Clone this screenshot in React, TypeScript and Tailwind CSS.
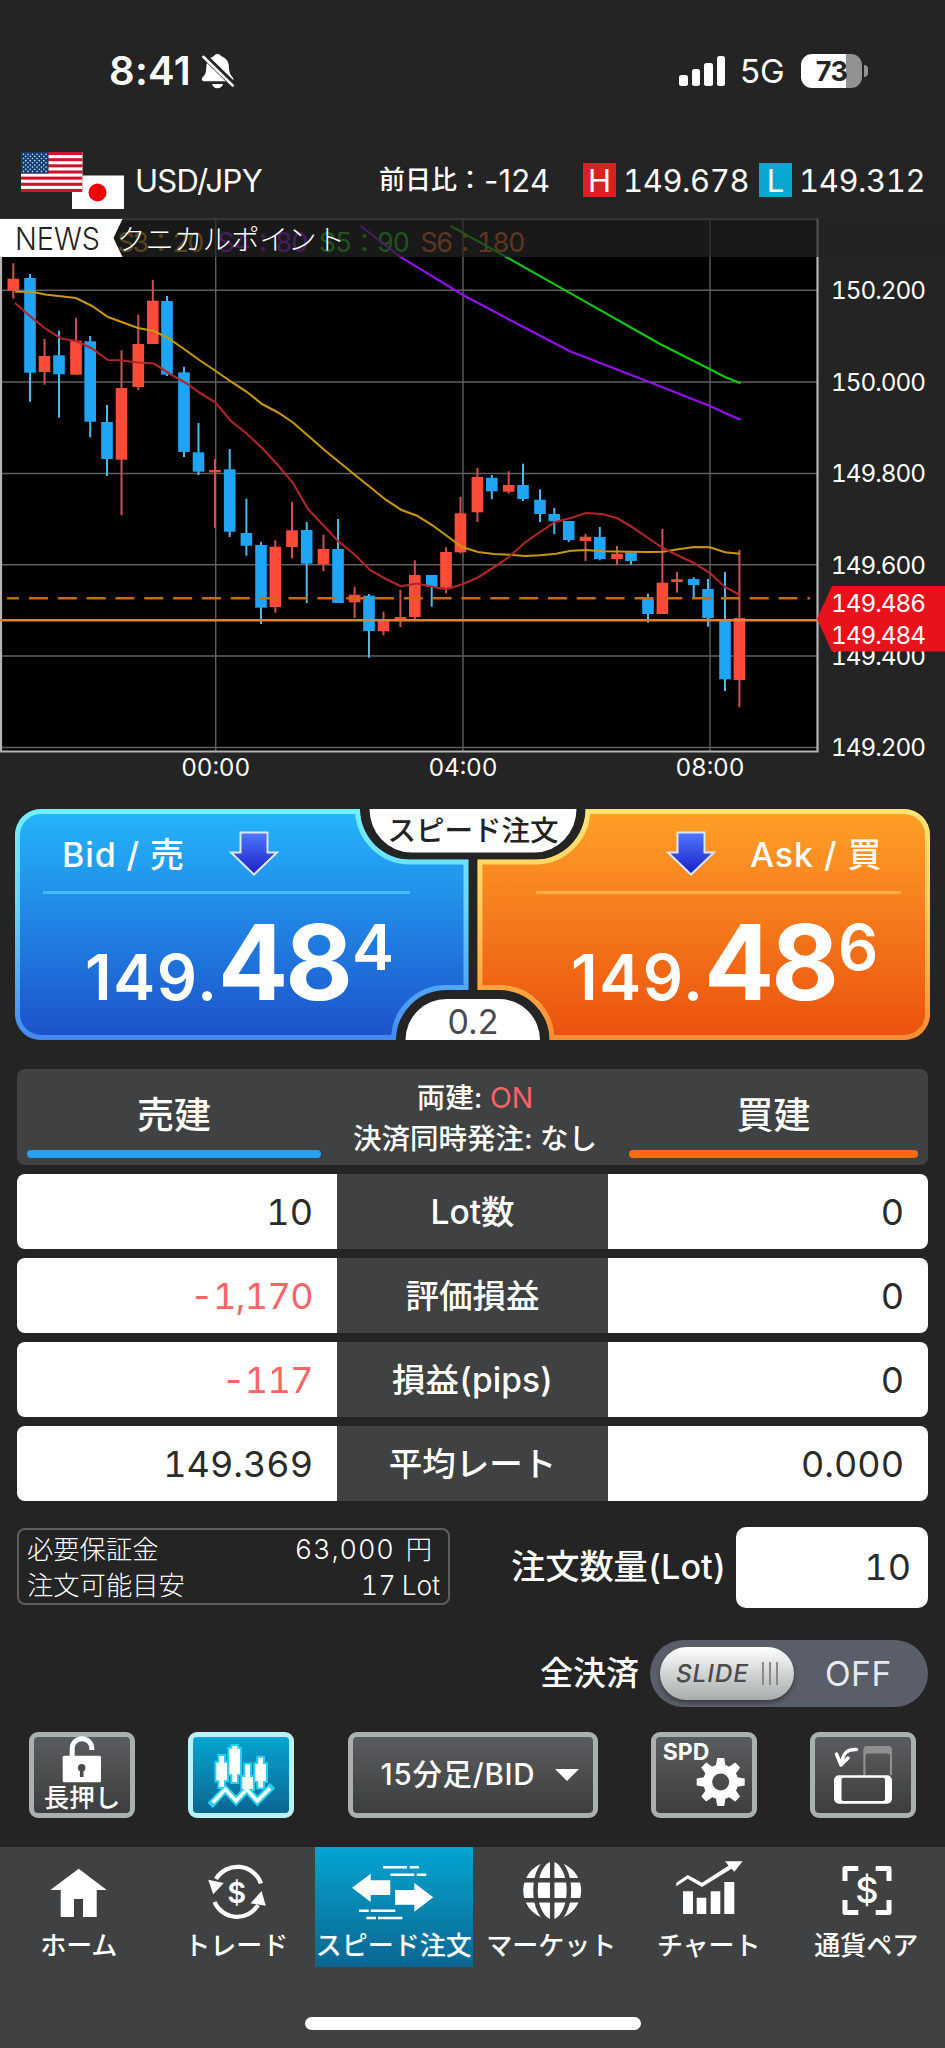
import React from "react";
import clsx from "clsx";

type Candle = [x: number, high: number, top: number, bottom: number, low: number, up: 0 | 1];

const candles: Candle[] = [
  [13.3, 263.3, 278.7, 290.7, 298.7, 1],
  [30, 274, 278, 372.7, 401.7, 0],
  [44.5, 339, 356, 372, 384.7, 1],
  [59, 330.7, 355.3, 374.3, 417.7, 0],
  [76, 318, 340.7, 374.7, 374.7, 1],
  [90.2, 336, 341.3, 421.7, 437.3, 0],
  [107, 405, 422, 459, 476, 0],
  [121.5, 350.3, 388, 459.7, 515, 1],
  [138.3, 314.7, 344, 387, 390, 1],
  [152.8, 280, 300.7, 344, 344, 1],
  [167, 296, 301, 374.7, 376, 0],
  [184, 366.7, 372.3, 452, 457, 0],
  [198.5, 423, 452.3, 471.7, 475, 0],
  [215, 459, 470, 472.3, 527.7, 1],
  [229.7, 449, 469.3, 531.7, 537, 0],
  [246.4, 498.7, 533, 545.7, 555.7, 0],
  [261, 542, 545, 607.7, 624, 0],
  [275.3, 540.3, 546.7, 607, 612.7, 1],
  [292, 502, 530.3, 547, 558.3, 1],
  [306.7, 522, 530, 563.7, 603, 0],
  [323.5, 534.7, 549, 564.3, 571.3, 1],
  [338, 519, 549, 603, 603, 0],
  [354.6, 586.7, 594.7, 602.3, 618, 1],
  [369, 594, 595.7, 631, 657.7, 0],
  [383.5, 611.7, 620.3, 631.3, 635.3, 1],
  [400.4, 590, 617, 621, 627, 1],
  [414.8, 560.3, 575, 617, 619.3, 1],
  [431.7, 575, 575, 587, 606.7, 0],
  [446, 547.3, 552, 587.7, 593.3, 1],
  [460.5, 496.7, 513.3, 552.3, 553.3, 1],
  [477.4, 468, 477, 512.3, 522, 1],
  [491.8, 475, 477.7, 491.3, 499.3, 0],
  [508.7, 471.3, 485, 491.7, 493.7, 1],
  [523, 463.7, 485, 499, 501, 0],
  [540, 489.3, 499.7, 514, 522, 0],
  [554.3, 508, 514, 521.3, 534, 0],
  [568.7, 521, 521, 540, 542, 0],
  [585.5, 534, 536.7, 541, 561, 1],
  [599.8, 527, 537, 559, 560.3, 0],
  [617, 546, 553.7, 559, 565, 1],
  [631, 551.7, 552.3, 561, 564.7, 0],
  [648, 593.7, 599, 614, 622.7, 0],
  [662.4, 529, 582.7, 614, 614, 1],
  [677, 572, 579.3, 582, 592.7, 1],
  [693.7, 577.3, 579, 585, 598.3, 0],
  [708, 579, 589, 618, 626.7, 0],
  [725, 572, 621, 679.3, 691, 0],
  [739.4, 550, 618, 680, 707.3, 1],
];

const averages = [
  {
    color: "#c8960f",
    points:
      "15,291.7 32,291.7 45,294.5 76,298 92,306 108,317 138,328 154,331 168,338 184,349 200,360.5 215,370.5 230,381 247,392 262,404 278,412.5 293,422.5 325,450.5 355,475 370,487 386,500 401,509.7 417,515.7 432,525 447,536 462,547 478,552 494,554 510,554.7 525,556 540,555.3 556,553.7 571,550.7 586,550 602,551.3 648,552 663,551.7 680,549 694,547 710,547.3 725,552.3 740,553.7",
  },
  {
    color: "#b0262b",
    points:
      "15,303 31,317 46,329 61,338.5 76,341 92,348.5 108,360 120,360.3 138,362.5 154,363.5 170,374 186,383 200,393 215,402 231,421 246,433 262,448 277,464 293,483 308,509 323,525 338,541 354,554 370,570 386,579 401,586.3 417,583.5 431,586.5 446,589.5 463,584 478,577.5 495,566.5 509,557 525,542.5 540,532 555,522 571,518 586,513 602,514 617,518 632,527 648,538 663,548 679,556 694,563 710,573 725,587 740,595",
  },
  {
    color: "#9410f0",
    points: "360.7,226 400,256.7 463,295 510,320 570,351.3 646.7,381 710,406 725,413 740.7,419.7",
  },
  {
    color: "#12c812",
    points: "450.7,226 506.7,257.3 560,287.3 660,344 710,369.3 725,377 740.7,383.3",
  },
];

const priceTicks = [
  ["150.200", 290.3],
  ["150.000", 382],
  ["149.800", 473.5],
  ["149.600", 564.7],
  ["149.400", 656],
  ["149.200", 747.5],
] as const;

const timeTicks = [
  ["00:00", 215.7],
  ["04:00", 463],
  ["08:00", 710],
] as const;

const legend = [
  ["S3：20", 117.5, 87, "#c8960f"],
  ["S4：80", 217.5, 91, "#9410f0"],
  ["S5：90", 319, 91, "#12c812"],
  ["S6：180", 420.5, 105, "#e0641e"],
] as const;

const rows = [
  { label: "Lot数", sell: "10", buy: "0", loss: false },
  { label: "評価損益", sell: "-1,170", buy: "0", loss: true },
  { label: "損益(pips)", sell: "-117", buy: "0", loss: true },
  { label: "平均レート", sell: "149.369", buy: "0.000", loss: false },
];

const StatusBar = () => (
  <div className="flex h-[143px] items-start justify-between pl-[109px] pr-[77px] pt-[47px]">
    <div className="flex h-12 items-center">
      <span className="w-[82px] whitespace-nowrap text-[40px] font-semibold leading-none tracking-[0.300px]">8:41</span>
      <svg width="34" height="36" viewBox="0 0 34 36" className="ml-[10px]">
        <path
          d="M16.500 1c-2 0-3.300 1-3.600 2.300C8.300 4.700 5.700 8.200 5.400 13.500c-.3 6.500-1.200 8.300-3.800 10.700-1.400 1.500-.8 4 1.600 4h27c2 0 3-2.200 1.600-3.800-2.500-2.600-3.600-4.500-3.900-10.900-.3-5.300-3-8.800-7.700-10.200C19.800 2 18.500 1 16.500 1zM11 31h11c-.5 2.500-2.600 4.200-5.500 4.200S11.500 33.500 11 31z"
          fill="#fff"
        />
        <path d="M1.500 1.500 34 33" stroke="#242424" strokeWidth="6" />
        <path d="M2.300 3.800 31.800 32.600" stroke="#fff" strokeWidth="2.600" strokeLinecap="round" />
      </svg>
    </div>
    <div className="flex h-12 items-center">
      <div className="flex h-[30px] items-end gap-[4px]">
        <span className="h-[11px] w-[8.500px] rounded-[2.500px] bg-white" />
        <span className="h-[17px] w-[8.500px] rounded-[2.500px] bg-white" />
        <span className="h-[23px] w-[8.500px] rounded-[2.500px] bg-white" />
        <span className="h-[30px] w-[8.500px] rounded-[2.500px] bg-white" />
      </div>
      <span className="ml-[15px] w-[61px] text-[33px] leading-none">5G</span>
      <div className="flex h-[34px] w-[61px] items-center justify-center rounded-[11px] bg-[linear-gradient(90deg,#fff_45px,#929292_45px)]">
        <span className="text-[27px] font-bold leading-none tracking-[-0.500px] text-[#242424]">73</span>
      </div>
      <span className="ml-[2px] h-3 w-1 rounded-r-full bg-[#929292]" />
    </div>
  </div>
);

const Flags = () => (
  <svg width="104" height="58" viewBox="0 0 104 58" className="ml-[21px] shrink-0">
    <rect width="61.500" height="40" fill="#fff" />
    {[0, 1, 2, 3, 4, 5, 6].map((i) => (
      <rect key={i} y={i * 6.15} width="61.500" height="3.080" fill="#d0142f" />
    ))}
    <rect width="27.500" height="21.500" fill="#123d73" />
    {Array.from({ length: 9 }, (_, r) =>
      Array.from({ length: r % 2 ? 5 : 6 }, (_, c) => (
        <circle key={`${r}-${c}`} cx={2.5 + c * 4.5 + (r % 2 ? 2.25 : 0)} cy={2.2 + r * 2.15} r="0.800" fill="#cfe4f2" />
      ))
    )}
    <path d="M61.500 23.500H103V57H51V40H61.500z" fill="#fff" />
    <circle cx="76.500" cy="40.500" r="9" fill="#f50000" />
  </svg>
);

const PairHeader = () => (
  <div className="flex h-[75px] items-start pt-[9px] text-[31px]">
    <Flags />
    <div className="mt-[4px] flex h-[48px] flex-1 items-center whitespace-nowrap leading-none">
      <span className="ml-[10px] w-[244px] tracking-[-0.700px]">USD/JPY</span>
      <span className="text-[26px] font-medium">前日比：</span>
      <span className="ml-[1px] w-[99px] tracking-[0.200px]">-124</span>
      <span className="flex h-[34px] w-[33px] items-center justify-center bg-[#d92121]">H</span>
      <span className="ml-[7px] w-[136px] tracking-[-0.400px] tabular-nums">149.678</span>
      <span className="flex h-[34px] w-[33px] items-center justify-center bg-[#06a8d2]">L</span>
      <span className="ml-[7px] tracking-[-0.400px] tabular-nums">149.312</span>
    </div>
  </div>
);

const Chart = () => (
  <svg width="945" height="578" viewBox="0 218 945 578" className="block shrink-0 tabular-nums">
    <rect x="0" y="219" width="818" height="533" fill="#000" />
    <g stroke="#5f5f5f" strokeWidth="1.400">
      {timeTicks.map(([label, x]) => (
        <line key={label} x1={x} x2={x} y1="219" y2="751" />
      ))}
      {priceTicks.map(([label, y]) => (
        <line key={label} x1="0" x2="817" y1={y} y2={y} />
      ))}
      <line x1="0" x2="818" y1="219.500" y2="219.500" />
    </g>
    <path d="M1 219V751.500H817.500V219" fill="none" stroke="#b4b4b4" strokeWidth="2.200" />

    {legend.map(([label, x, w, color]) => (
      <text key={label} x={x} y="252" fontSize="26.500" fill={color} textLength={w} lengthAdjust="spacing">
        {label}
      </text>
    ))}

    {candles.map(([x, high, top, bottom, low, up]) => (
      <g key={x}>
        <rect x={x - 1} y={high} width="2" height={low - high} fill={up ? "#cf5050" : "#4fb9ee"} />
        <rect x={x - 5.8} y={top} width="11.600" height={bottom - top} fill={up ? "#ff4b3a" : "#20a4f6"} />
      </g>
    ))}
    {averages.map((line) => (
      <polyline key={line.color} points={line.points} fill="none" stroke={line.color} strokeWidth="2.100" />
    ))}
    <line x1="7" x2="19" y1="598.300" y2="598.300" stroke="#cd6a08" strokeWidth="2.400" />
    <line x1="29" x2="810" y1="598.300" y2="598.300" stroke="#cd6a08" strokeWidth="2.400" strokeDasharray="19 9.830" />
    <line x1="0" x2="817" y1="620.200" y2="620.200" stroke="#de8336" strokeWidth="2.400" />

    {/* news ticker */}
    <rect x="0" y="219" width="945" height="38" fill="#242424" fillOpacity="0.700" />
    <path d="M0 219H122.500L113.500 238L122.500 257H0z" fill="#fff" />
    <text x="15" y="250" fontSize="31.500" fontWeight="300" fill="#222" textLength="85" lengthAdjust="spacingAndGlyphs">
      NEWS
    </text>
    <text x="117" y="249.500" fontSize="28.500" fontWeight="300" fill="#fff">
      クニカルポイント
    </text>

    <g fill="#fff" fontSize="24.300">
      {priceTicks.map(([label, y]) => (
        <text key={label} x="831" y={y + 8.8} textLength="95" lengthAdjust="spacing">
          {label}
        </text>
      ))}
      {timeTicks.map(([label, x]) => (
        <text key={label} x={x - 34.5} y="775.700" textLength="69" lengthAdjust="spacing">
          {label}
        </text>
      ))}
      <path d="M817 618.700 832 586H945V651.500H832z" fill="#e9121c" />
      <text x="831" y="611.500" textLength="95" lengthAdjust="spacing">
        149.486
      </text>
      <text x="831" y="643.700" textLength="95" lengthAdjust="spacing">
        149.484
      </text>
    </g>
  </svg>
);

const DownArrow = ({ className }: { className?: string }) => (
  <svg width="50" height="48" viewBox="0 0 50 48" className={clsx("shrink-0", className)}>
    <path d="M11.500 2.500H38.500V22.500H48L25 44.500 2 22.500H11.500z" fill="url(#arrow)" stroke="#dce6ff" strokeWidth="2" />
  </svg>
);

const Price = ({ pip, className }: { pip: string; className?: string }) => (
  <div className={clsx("flex items-end font-semibold leading-none", className)}>
    <span className="w-[133px] shrink-0 text-[63px] leading-[59px] tracking-[1.600px]">149.</span>
    <span className="w-[134px] shrink-0 text-[104px] font-bold leading-[89px] tracking-[-3px]">48</span>
    <span className="mb-[30px] text-[63px] leading-[59px]">{pip}</span>
  </div>
);

const RatePanel = () => (
  <div className="grid h-[260px] w-[945px] shrink-0 pt-[13px]">
    <svg width="945" height="231" viewBox="0 809 945 231" className="[grid-area:1/1]">
      <defs>
        <linearGradient id="blue" x1="0" y1="0" x2="0" y2="1">
          <stop offset="0" stopColor="#24b6fb" />
          <stop offset="1" stopColor="#1d50ca" />
        </linearGradient>
        <linearGradient id="blueEdge" gradientUnits="userSpaceOnUse" x1="0" y1="809" x2="0" y2="1040">
          <stop offset="0" stopColor="#72efff" />
          <stop offset="0.400" stopColor="#66d8fd" />
          <stop offset="1" stopColor="#4488f2" />
        </linearGradient>
        <linearGradient id="orange" x1="0" y1="0" x2="0" y2="1">
          <stop offset="0" stopColor="#ffa128" />
          <stop offset="1" stopColor="#ea500e" />
        </linearGradient>
        <linearGradient id="orangeEdge" gradientUnits="userSpaceOnUse" x1="0" y1="809" x2="0" y2="1040">
          <stop offset="0" stopColor="#ffe572" />
          <stop offset="0.400" stopColor="#ffce5c" />
          <stop offset="1" stopColor="#fe8c32" />
        </linearGradient>
        <linearGradient id="arrow" x1="0" y1="0" x2="0" y2="1">
          <stop offset="0" stopColor="#5078ff" />
          <stop offset="1" stopColor="#1a1fc4" />
        </linearGradient>
        <clipPath id="bidClip">
          <path d="M41 809H360A50 50.500 0 0 0 410 859.500H468.500V990H446A50 50 0 0 0 396 1040H41A26 26 0 0 1 15 1014V835A26 26 0 0 1 41 809z" />
        </clipPath>
        <clipPath id="askClip">
          <path d="M904 809H585.500A50 50.500 0 0 1 535.500 859.500H477.500V990H499.500A50 50 0 0 1 549.500 1040H904A26 26 0 0 0 930 1014V835A26 26 0 0 0 904 809z" />
        </clipPath>
      </defs>
      <path
        clipPath="url(#bidClip)"
        fill="url(#blue)"
        stroke="url(#blueEdge)"
        strokeWidth="10"
        d="M41 809H360A50 50.500 0 0 0 410 859.500H468.500V990H446A50 50 0 0 0 396 1040H41A26 26 0 0 1 15 1014V835A26 26 0 0 1 41 809z"
      />
      <path
        clipPath="url(#askClip)"
        fill="url(#orange)"
        stroke="url(#orangeEdge)"
        strokeWidth="10"
        d="M904 809H585.500A50 50.500 0 0 1 535.500 859.500H477.500V990H499.500A50 50 0 0 1 549.500 1040H904A26 26 0 0 0 930 1014V835A26 26 0 0 0 904 809z"
      />
      <path d="M369.500 809H576.500A42 43.500 0 0 1 534.500 852.500H411.500A42 43.500 0 0 1 369.500 809z" fill="#fff" />
      <path d="M405.500 1040A41 41 0 0 1 446.500 999H499A41 41 0 0 1 540 1040z" fill="#fff" />
    </svg>
    <div className="flex h-[231px] [grid-area:1/1]">
      <div className="w-[368px] shrink-0 pt-[20px]">
        <div className="flex h-[62px] items-start pl-[62px] text-[34px]">
          <span className="mt-[4px] w-[167px] shrink-0 whitespace-nowrap font-medium leading-[44px] tracking-[0.900px]">Bid / 売</span>
          <DownArrow className="mt-px" />
        </div>
        <div className="ml-[43px] h-[2.500px] w-[367px] bg-[#47bbfb]" />
        <Price pip="4" className="ml-[85px] mt-[24px]" />
      </div>
      <div className="flex w-[210px] shrink-0 flex-col items-center justify-between text-[#222]">
        <span className="mt-px whitespace-nowrap text-[28.500px] font-medium leading-[42px]">スピード注文</span>
        <span className="text-[34px] leading-[37px] text-[#4a4a4e]">0.2</span>
      </div>
      <div className="w-[367px] shrink-0 pt-[20px]">
        <div className="flex h-[62px] items-start pl-[88px] text-[34px]">
          <DownArrow className="mt-px" />
          <span className="ml-[34px] mt-[4px] whitespace-nowrap font-medium leading-[44px] tracking-[0.900px]">Ask / 買</span>
        </div>
        <div className="-ml-[42px] h-[2.500px] w-[365px] bg-[#ffae48]" />
        <Price pip="6" className="-ml-[7px] mt-[24px]" />
      </div>
    </div>
  </div>
);

const PositionTable = () => (
  <div className="mx-[17px] w-[911px] shrink-0">
    <div className="flex h-[96px] justify-between rounded-lg bg-[#3f4143] px-[10px]">
      <div className="flex w-[294px] flex-col items-center justify-between pb-[7px] pt-[22px]">
        <span className="text-[37px] font-medium leading-[50px]">売建</span>
        <span className="h-2 w-full rounded bg-[#27a0f2]" />
      </div>
      <div className="flex flex-col items-center whitespace-nowrap pt-[8px] text-[28.500px] font-medium leading-[41px]">
        <span>
          両建: <span className="font-normal text-[#fb6467]">ON</span>
        </span>
        <span>決済同時発注: なし</span>
      </div>
      <div className="flex w-[289px] flex-col items-center justify-between pb-[7px] pt-[22px]">
        <span className="text-[37px] font-medium leading-[50px]">買建</span>
        <span className="h-2 w-full rounded bg-[#fe6a12]" />
      </div>
    </div>
    <div className="mt-[9px] flex flex-col gap-[9.500px]">
      {rows.map((row) => (
        <div key={row.label} className="flex h-[74.500px] overflow-hidden rounded-lg bg-white text-[36px] tabular-nums text-[#2b2b2b]">
          <div className={clsx("flex w-[320px] items-center justify-end pr-[24px] pt-px", row.loss && "tracking-[-0.600px] text-[#fb6467]")}>
            {row.sell}
          </div>
          <div className="flex w-[271px] items-center justify-center bg-[#3f4143] pt-[2px] text-[33.500px] font-medium text-white">
            {row.label}
          </div>
          <div className="flex flex-1 items-center justify-end pr-[24px] pt-px">{row.buy}</div>
        </div>
      ))}
    </div>
  </div>
);

const OrderInfo = () => (
  <div className="mt-[26px] flex h-[81px] items-center px-[17px] tabular-nums">
    <div className="-mt-px flex h-[77px] w-[433px] shrink-0 flex-col justify-center rounded-lg border-2 border-[#5c5e60] pl-[8px] pr-[8px] pt-[2px] text-[26.300px] font-light leading-[36px]">
      <div className="flex justify-between pr-[8px]">
        <span>必要保証金</span>
        <span className="flex">
          <span className="text-[27px] tracking-[0.900px]">63,000</span>
          <span className="ml-[11px]">円</span>
        </span>
      </div>
      <div className="flex justify-between">
        <span>注文可能目安</span>
        <span className="flex">
          <span className="text-[27px]">17</span>
          <span className="ml-[6px]">Lot</span>
        </span>
      </div>
    </div>
    <span className="ml-[61px] w-[225px] shrink-0 whitespace-nowrap text-[34.200px] font-medium">注文数量(Lot)</span>
    <div className="flex h-[81px] flex-1 items-center justify-end rounded-[10px] bg-white pr-[17px] text-[36px] text-[#2b2b2b]">
      10
    </div>
  </div>
);

const CloseAll = () => (
  <div className="mt-[32px] flex h-[67px] items-center justify-end pr-[17px]">
    <span className="mr-[11px] mt-[2px] text-[33px] font-medium">全決済</span>
    <div className="flex h-[67px] w-[278px] items-center rounded-full bg-[#5a5e68] pl-[10px]">
      <div className="flex h-[53px] w-[134px] items-center rounded-full bg-linear-to-b from-white to-[#a8acac] pl-[16px] shadow-[0_3px_4px_rgba(0,0,0,0.35)]">
        <span className="w-[86px] text-[24.500px] font-medium italic tracking-[0.800px] text-[#4c4c4e]">SLIDE</span>
        <span className="flex gap-[5px]">
          <span className="h-[23px] w-[2px] bg-[#8a8a8a]" />
          <span className="h-[23px] w-[2px] bg-[#8a8a8a]" />
          <span className="h-[23px] w-[2px] bg-[#8a8a8a]" />
        </span>
      </div>
      <span className="ml-[31px] mt-[3px] text-[33.500px] tracking-[0.500px] text-[#e6e9f2]">OFF</span>
    </div>
  </div>
);

const toolButton =
  "relative flex h-[86px] w-[106px] items-center justify-center rounded-[9px] border-[5px] border-[#aaafaf] bg-linear-to-b from-[#5a5d5f] to-[#3d3d3f]";

const candleShapes = (
  <path d="M26.300 19h4.700v6.700h3v17.600h-3V50h-4.700V43.300h-3V25.700h3zM39.300 9h4.700v2.700h3v25.600h-3V45h-4.700V37.300h-3V11.700h3zM52.300 27.500h4.700V40h3v12h-10.700V40h3zM65.300 20.700h4.700v6.600h3V44h-3v6.500h-4.700V44h-3V27.300h3z" />
);

const waveLine = <path d="M19.700 65.700 32.300 52.300 43 64 53.700 52.300 64.300 64 77 51.300" fill="none" />;

const Toolbar = () => (
  <div className="mt-[25px] flex h-[115px] items-start justify-between pl-[29px] pr-[29px]">
    <button className={clsx(toolButton, "flex-col")}>
      <svg width="96" height="46" viewBox="0 0 96 46" className="shrink-0 overflow-visible">
        <path d="M38.200 20V11.500a9.800 9.800 0 0 1 19.600 0V13" fill="none" stroke="#fff" strokeWidth="5" />
        <rect x="28.700" y="18.700" width="38.300" height="26.500" rx="1.500" fill="#fff" />
        <circle cx="47.700" cy="30.700" r="3.800" fill="#4a4b4d" />
        <path d="M47.700 31V40" stroke="#4a4b4d" strokeWidth="3.600" />
      </svg>
      <span className="h-[30px] text-[25.500px] font-medium leading-[29px]">長押し</span>
    </button>
    <button className="flex h-[86px] w-[106px] items-center justify-center rounded-[9px] border-[5px] border-[#b9f2fe] bg-linear-to-b from-[#03a5d1] to-[#0a6691]">
      <svg width="96" height="76" viewBox="0 0 96 76">
        <g stroke="#27d0f2" strokeWidth="4">
          {candleShapes}
        </g>
        <g stroke="#27d0f2" strokeWidth="7.500" strokeLinecap="square">
          {waveLine}
        </g>
        <g fill="#fff">{candleShapes}</g>
        <g stroke="#fff" strokeWidth="3.500">
          {waveLine}
        </g>
      </svg>
    </button>
    <button className="flex h-[86px] w-[250px] items-center rounded-[9px] border-[5px] border-[#aaafaf] bg-linear-to-b from-[#5a5d5f] to-[#3d3d3f] pl-[28px] text-[29.500px]">
      <span className="w-[174px] shrink-0 whitespace-nowrap text-left font-medium tracking-[0.700px]">15分足/BID</span>
      <svg width="24" height="12" viewBox="0 0 24 12">
        <path d="M0 0H24L12 12z" fill="#fff" />
      </svg>
    </button>
    <button className={toolButton}>
      <span className="absolute left-[7px] top-[2px] text-[23px] font-bold leading-[27px]">SPD</span>
      <svg width="96" height="76" viewBox="0 0 96 76">
        <g transform="translate(64.700 45)" fill="#fff">
          <circle r="13" fill="none" stroke="#fff" strokeWidth="9" />
          {[0, 45, 90, 135, 180, 225, 270, 315].map((deg) => (
            <path key={deg} d="M-5 -15 -3.500 -24H3.500L5 -15z" transform={`rotate(${deg})`} />
          ))}
        </g>
      </svg>
    </button>
    <button className={toolButton}>
      <svg width="96" height="76" viewBox="0 0 96 76">
        <path d="M48.300 38.300V13a4 4 0 0 1 4-4H73a4 4 0 0 1 4 4V38.300H75V19a2.500 2.500 0 0 0-2.500-2.500H53a2.500 2.500 0 0 0-2.500 2.500V38.300z" fill="#8e9092" />
        <path
          fillRule="evenodd"
          d="M24 38.300H72a5 5 0 0 1 5 5V61.700a5 5 0 0 1-5 5H24a5 5 0 0 1-5-5V43.300a5 5 0 0 1 5-5zM28.500 40.700a2 2 0 0 0-2 2V62a2 2 0 0 0 2 2H68a2 2 0 0 0 2-2V42.700a2 2 0 0 0-2-2z"
          fill="#fff"
        />
        <path d="M41.500 12.500C33 12 28 15 26.500 27M21.500 17 26 28 33 21" fill="none" stroke="#fff" strokeWidth="3.400" strokeLinecap="round" strokeLinejoin="round" />
      </svg>
    </button>
  </div>
);

const navItems = [
  {
    label: "ホーム",
    icon: <path d="M78.700 21.700 106.700 43H96.700V70H83V52H74V70H60.700V43H50.300z" />,
  },
  {
    label: "トレード",
    icon: (
      <>
        <path d="M103 36.500A25 25 0 0 0 58 32M56.500 55A24.500 24.500 0 0 0 100 58" fill="none" stroke="#fff" strokeWidth="4.300" />
        <path d="M50.200 32.700 65.800 36 55.200 47.300zM103.500 44 107.800 58.700 92.500 56.300z" />
        <text x="78.800" y="55.500" fontSize="29" fontWeight="600" textAnchor="middle">
          $
        </text>
      </>
    ),
  },
  {
    label: "スピード注文",
    icon: (
      <>
        <path d="M37 40.700 55.700 26.700V33.300H75.300V48H55.700V55zM118.300 50.300 99.300 36V43H80V57.700H99.300V64.700z" />
        <path
          d="M68 20.300H92M94.700 20.300H104M75.300 27.700H99.300M101.700 27.700H111.300M44 63.700H53.700M55.700 63.700H80.300M51.300 71H61M63 71H87.300"
          stroke="#fff"
          strokeWidth="2.600"
        />
      </>
    ),
  },
  {
    label: "マーケット",
    icon: (
      <>
        <circle cx="79.200" cy="43.500" r="29" />
        <g stroke="#404143" strokeWidth="4.500" fill="none">
          <path d="M79.200 13V74M49 33.300H110M49 53.200H110" />
          <ellipse cx="79.200" cy="43.500" rx="16.700" ry="31" />
        </g>
      </>
    ),
  },
  {
    label: "チャート",
    icon: (
      <>
        <path d="M46.300 35.700 57.700 28 72 35.700 98.500 18.800 95 14.300H112.700L104.300 24.700 101.500 21.700 72 40 57.700 31.700 46.300 39.300z" />
        <path d="M53 44.300H63V67H53zM66.700 50.700H76.300V67H66.700zM80.700 44.300H90.300V67H80.700zM94.300 35H104.300V67H94.300z" />
      </>
    ),
  },
  {
    label: "通貨ペア",
    icon: (
      <>
        <path
          d="M57 34V21.500H70.300M87.700 21.500H101V34M101 53V65.500H87.700M70.300 65.500H57V53"
          fill="none"
          stroke="#fff"
          strokeWidth="5"
          strokeLinejoin="round"
        />
        <text x="78.800" y="56" fontSize="36" fontWeight="500" textAnchor="middle">
          $
        </text>
      </>
    ),
  },
];

const BottomNav = () => (
  <div className="flex flex-1 flex-col bg-[#404143]">
    <div className="grid h-[120px] grid-cols-6">
      {navItems.map((item, i) => (
        <div key={item.label} className={clsx("flex flex-col items-center", i === 2 && "bg-linear-to-b from-[#03a5d1] to-[#0a6691]")}>
          <svg width="157.500" height="80" viewBox="0 0 157.500 80" fill="#fff">
            {item.icon}
          </svg>
          <span className="whitespace-nowrap text-[26px] font-medium leading-[38px]">{item.label}</span>
        </div>
      ))}
    </div>
    <div className="mx-auto mt-[50px] h-[13px] w-[336px] rounded-full bg-white" />
  </div>
);

export default function App() {
  return (
    <div className="flex h-[2048px] w-[945px] flex-col overflow-hidden bg-[#242424] font-['Inter','Noto_Sans_CJK_JP',sans-serif] text-white">
      <StatusBar />
      <PairHeader />
      <Chart />
      <RatePanel />
      <div className="-mt-px shrink-0 pt-[14px]">
        <PositionTable />
      </div>
      <OrderInfo />
      <CloseAll />
      <Toolbar />
      <BottomNav />
    </div>
  );
}
